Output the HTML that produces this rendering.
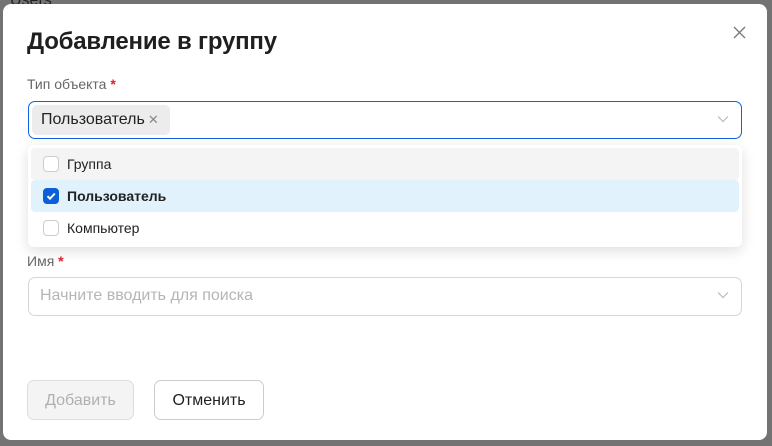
<!DOCTYPE html>
<html><head><meta charset="utf-8"><style>
*{box-sizing:border-box;margin:0;padding:0}
body{width:772px;height:446px;background:#737373;font-family:"Liberation Sans",sans-serif;position:relative;overflow:hidden}
.bgtxt{position:absolute;left:10px;top:-8px;color:#222;font-size:16px}
.modal{position:absolute;left:3px;top:4px;width:764px;height:436px;background:#fff;border-radius:8px}
.abs{position:absolute}
h1{position:absolute;left:24px;top:24px;font-size:24px;font-weight:bold;color:#1f1f1f;letter-spacing:-0.2px}
.lbl{font-size:14px;color:#666}
.lbl b{color:#e0202c;font-weight:bold}
.sel{border:1px solid #1062e0;border-radius:7px}
.inp{border:1px solid #d6d6d6;border-radius:7px}
.chev{position:absolute;right:12px;top:13px}
.tag{position:absolute;left:3px;top:3px;width:138px;height:30px;background:#ececec;border-radius:5px;font-size:16px;color:#222;padding:6px 0 0 9px}
.tag span{color:#888;font-size:13px;margin-left:3px}
.dd{position:absolute;left:25px;top:141px;width:714px;height:102px;background:#fff;border-radius:6px;box-shadow:0 4px 14px rgba(0,0,0,0.13)}
.opt{position:absolute;left:3px;width:708px;height:32px;border-radius:4px;font-size:14px;color:#222;padding:8px 0 0 36px}
.cb{position:absolute;left:12px;top:8px;width:16px;height:16px;border:1px solid #ccc;border-radius:4px;background:#fff}
.cb.on{background:#0b5fd8;border-color:#0b5fd8}
.btn{position:absolute;top:376px;height:40px;border-radius:7px;font-size:16px;text-align:center;padding-top:11px}
</style></head><body>
<div class="bgtxt">Users</div>
<div class="modal">
<h1>Добавление в группу</h1>
<svg class="abs" style="left:730px;top:22px" width="13" height="13" viewBox="0 0 13 13"><path d="M1 1L12 12M12 1L1 12" stroke="#777" stroke-width="1.3"/></svg>
<div class="abs lbl" style="left:24px;top:72px">Тип объекта <b>*</b></div>
<div class="abs sel" style="left:25px;top:97px;width:714px;height:38px">
<div class="tag">Пользователь<span>✕</span></div>
<svg class="chev" width="12" height="8" viewBox="0 0 12 8"><path d="M1 1.5L6 6.5L11 1.5" fill="none" stroke="#bbb" stroke-width="1.2"/></svg>
</div>
<div class="dd">
<div class="opt" style="top:3px;background:#f4f4f4"><div class="cb"></div>Группа</div>
<div class="opt" style="top:35px;background:#e1f2fc;font-weight:bold"><div class="cb on"><svg width="14" height="14" viewBox="0 0 14 14" style="position:absolute;left:0;top:0"><path d="M3.5 7.2L6 9.7L10.8 4.5" fill="none" stroke="#fff" stroke-width="2"/></svg></div>Пользователь</div>
<div class="opt" style="top:67px"><div class="cb"></div>Компьютер</div>
</div>
<div class="abs lbl" style="left:24px;top:249px">Имя <b>*</b></div>
<div class="abs inp" style="left:25px;top:273px;width:714px;height:39px;font-size:16px;color:#b5b5b5;padding:9px 0 0 11px">Начните вводить для поиска
<svg class="chev" width="12" height="8" viewBox="0 0 12 8"><path d="M1 1.5L6 6.5L11 1.5" fill="none" stroke="#bbb" stroke-width="1.2"/></svg>
</div>
<div class="btn" style="left:24px;width:107px;background:#f4f4f4;border:1px solid #ddd;color:#b0b0b0">Добавить</div>
<div class="btn" style="left:151px;width:110px;background:#fff;border:1px solid #ccc;color:#1f1f1f">Отменить</div>
</div>
</body></html>
